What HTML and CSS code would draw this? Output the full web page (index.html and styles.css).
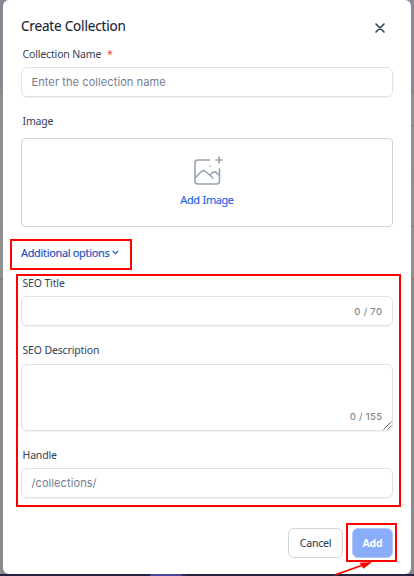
FILE: index.html
```html
<!DOCTYPE html>
<html lang="en">
<head>
    <meta charset="UTF-8">
    <meta name="viewport" content="width=device-width, initial-scale=1.0">
    <title>Create Collection</title>
    <link rel="stylesheet" href="styles.css">
</head>
<body>
    <div class="modal">
        <div class="modal-header">
            <h1 class="modal-title">Create Collection</h1>
            <svg class="close-icon" width="10" height="10" viewBox="0 0 10 10"><path d="M1 1l8 8M9 1L1 9"/></svg>
        </div>

        <div class="label name-label">Collection Name <span class="required">*</span></div>
        <div class="input"><span class="placeholder">Enter the collection name</span></div>

        <div class="label image-label">Image</div>
        <div class="upload">
            <svg class="image-icon" width="32" height="32" viewBox="0 0 32 32">
                <path d="M18.500 5H7a3 3 0 0 0-3 3v18a3 3 0 0 0 3 3h18.500a3 3 0 0 0 3-3V14"/>
                <path d="M4 23l6.500-6.500c1.500-1.300 2.600-1.300 4 0l7.500 6.500M19.500 19.500l2-1.800c1.400-1.200 2.500-1.200 4 0l2.500 2.300"/>
                <path d="M28 2v6M25 5h6"/>
                <circle cx="19" cy="11" r=".8"/>
            </svg>
            <span class="upload-text">Add Image</span>
        </div>

        <div class="options">
            <span class="options-text">Additional options</span>
            <svg class="chevron" width="7" height="5" viewBox="0 0 7 5"><path d="M.7.8l2.800 2.800L6.300.8"/></svg>
        </div>

        <div class="label title-label">SEO Title</div>
        <div class="input input-count"><span class="count">0 / 70</span></div>

        <div class="label desc-label">SEO Description</div>
        <div class="textarea">
            <span class="count count-desc">0 / 155</span>
            <svg class="resize" width="9" height="9" viewBox="0 0 9 9"><path d="M.5 8.500l8-8M4.500 8.500l4-4"/></svg>
        </div>

        <div class="label handle-label">Handle</div>
        <div class="input"><span class="placeholder">/collections/</span></div>

        <div class="footer">
            <div class="btn cancel-btn"><span>Cancel</span></div>
            <div class="btn add-btn"><span>Add</span></div>
        </div>
    </div>
    <div class="taskbar"></div>

    <!-- highlights drawn over the dialog -->
    <div class="mark mark-options"></div>
    <div class="mark mark-seo"></div>
    <div class="mark mark-add"></div>
    <svg class="arrow" width="40" height="16" viewBox="0 0 40 16">
        <path class="arrow-line" d="M0 15L28 5"/>
        <path class="arrow-head" d="M37 2L24.500 2.800L28.500 8.700Z"/>
    </svg>
</body>
</html>
```

FILE: styles.css
```css
* {
    box-sizing: border-box;
}
body {
    position: relative;
    height: 576px;
    margin: 0;
    padding: 0 3px;
    overflow: hidden;
    background: linear-gradient(#868b92 0, #868b92 92px, #808080 93px, #8f908f 94px, #8f908f 125px, #808080 126px, #8f908f 127px, #8f908f 175px, #808080 176px, #8f908f 177px, #8f908f 225px, #808080 226px, #8f908f 227px, #8f908f 277px, #777 279px, #888c90 280px);
    font-family: "Noto Sans", sans-serif;
    color: #344054;
}
.modal {
    display: flex;
    flex-direction: column;
    height: 574px;
    padding: 0 18px;
    border-radius: 6px;
    background: #fff;
}
.modal-header {
    display: flex;
    justify-content: space-between;
    height: 37px;
    margin-top: 8px;
    padding-right: 8px;
}
.modal-title {
    margin: 0;
    font-size: 13.5px;
    font-weight: 400;
    line-height: 37px;
    letter-spacing: -0.18px;
    color: #182230;
    -webkit-text-stroke: 0.1px #182230;
}
.close-icon {
    margin-top: 15px;
    fill: none;
    stroke: #344054;
    stroke-width: 1.6;
    stroke-linecap: round;
}
.label {
    height: 18px;
    padding-left: 1.5px;
    font-size: 10.5px;
    line-height: 18px;
    letter-spacing: -0.15px;
    white-space: nowrap;
}
.required {
    margin-left: 3px;
    color: #f04438;
}
.input {
    display: flex;
    align-items: center;
    height: 30px;
    padding: 0 9.5px;
    border: 1px solid #dfe1e7;
    border-radius: 6px;
    box-shadow: 0 1px 1px rgba(16,24,40,0.05);
}
.input-count {
    justify-content: flex-end;
}
.placeholder {
    font-family: Inter, sans-serif;
    font-size: 11px;
    letter-spacing: 0.09px;
    color: #737d92;
}
.count {
    font-family: Inter, sans-serif;
    font-size: 9.5px;
    font-weight: 500;
    letter-spacing: 0.35px;
    color: #85888c;
}
.name-label {
    margin-bottom: 4px;
}
.image-label {
    margin: 15px 0 8px;
}
.upload {
    display: flex;
    flex-direction: column;
    align-items: center;
    height: 89px;
    padding-top: 16px;
    border: 1px solid #cfd3dc;
    border-radius: 4px;
}
.image-icon {
    fill: none;
    stroke: #98a2b3;
    stroke-width: 1.6;
    stroke-linecap: round;
    stroke-linejoin: round;
}
.image-icon circle {
    fill: #98a2b3;
    stroke: none;
}
.upload-text {
    margin-top: 4px;
    font-size: 11px;
    line-height: 18px;
    letter-spacing: -0.42px;
    word-spacing: 0.5px;
    color: #2563eb;
    -webkit-text-stroke: 0.15px #2563eb;
}
.options {
    display: flex;
    align-items: center;
    gap: 3px;
    height: 18px;
    margin-top: 16px;
    margin-bottom: 1px;
    font-size: 11px;
    letter-spacing: -0.34px;
    color: #1d50bd;
    -webkit-text-stroke: 0.15px #1d50bd;
}
.chevron {
    fill: none;
    stroke: #1d50bd;
    stroke-width: 1.2;
}
.title-label {
    margin: 12px 0 4px;
}
.desc-label {
    margin: 15px 0 5px;
}
.textarea {
    position: relative;
    height: 67px;
    border: 1px solid #dfe1e7;
    border-radius: 6px;
    box-shadow: 0 1px 1px rgba(16,24,40,0.05);
}
.count-desc {
    position: absolute;
    right: 9.5px;
    bottom: 8px;
}
.resize {
    position: absolute;
    right: 0;
    bottom: 0;
    stroke: #555;
    stroke-width: 0.9;
}
.handle-label {
    margin: 15px 0 4px;
}
.footer {
    display: flex;
    justify-content: flex-end;
    gap: 9px;
    margin-top: 30px;
}
.btn {
    display: flex;
    align-items: center;
    justify-content: center;
    height: 30px;
    border: 1px solid #cfd3dc;
    border-radius: 6px;
    font-size: 10.5px;
}
.cancel-btn {
    width: 55px;
    letter-spacing: -0.2px;
    -webkit-text-stroke: 0.1px #344054;
}
.add-btn {
    width: 41px;
    border-color: #b2c8fb;
    background: #8aadf9;
    color: #fff;
    font-weight: 700;
    letter-spacing: -0.15px;
}
.taskbar {
    height: 2px;
    margin: 0 -3px;
    background: linear-gradient(90deg, #25243f 150px, #47459a 150px, #47459a 182px, #302e58 182px, #302e58 186px, #25243f 186px);
}
.mark {
    position: absolute;
    border: 2px solid #f00;
}
.mark-options {
    left: 10px;
    top: 239px;
    width: 122px;
    height: 31px;
}
.mark-seo {
    left: 16px;
    top: 274px;
    width: 385px;
    height: 233px;
}
.mark-add {
    left: 346px;
    top: 523px;
    width: 51px;
    height: 39px;
}
.arrow {
    position: absolute;
    left: 335px;
    top: 560px;
}
.arrow-line {
    stroke: #f00;
    stroke-width: 1.7;
}
.arrow-head {
    fill: #f00;
}
```
